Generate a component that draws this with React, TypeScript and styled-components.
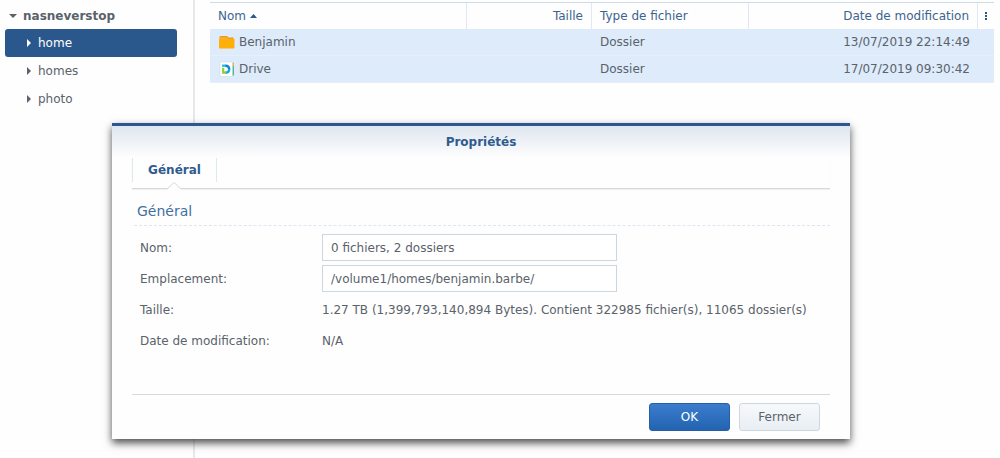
import React from "react";
import styled, { createGlobalStyle, css } from "styled-components";

const GlobalStyle = createGlobalStyle`
  *, *::before, *::after { box-sizing: border-box; }
  body {
    margin: 0;
    background: #fefefe;
    color: #5a626a;
    font-family: "DejaVu Sans", Verdana, sans-serif;
    font-size: 12px;
    line-height: 16px;
  }
  button, input { font: inherit; color: inherit; }
`;

const Screen = styled.div`
  position: relative;
  display: flex;
  min-height: 100vh;
`;

const Sidebar = styled.nav`
  flex: none;
  width: 195px;
  padding: 2px 16px 0 5px;
  border-right: 2px solid #e6e9ec;
`;

const TreeItem = styled.button<{ $level: number; $selected?: boolean }>`
  display: flex;
  align-items: center;
  gap: ${(p) => (p.$level === 0 ? 6 : 7)}px;
  width: 100%;
  height: ${(p) => (p.$level === 0 ? 27 : 28)}px;
  padding: 0 0 0 ${(p) => (p.$level === 0 ? 4 : 22)}px;
  border: 0;
  border-radius: 3px;
  background: none;
  text-align: left;
  font-weight: ${(p) => (p.$level === 0 ? 700 : 400)};
  ${(p) =>
    p.$selected &&
    css`
      background: #2a588c;
      color: #fff;
    `}
`;

const Content = styled.main`
  flex: 1;
  min-width: 0;
  padding: 2px 6px 0 15px;
`;

const FileTable = styled.table`
  width: 100%;
  table-layout: fixed;
  border-collapse: separate;
  border-spacing: 0;
  border-top: 1px solid #cddcea;
`;

const Col = styled.col<{ $width?: number }>`
  width: ${(p) => (p.$width ? `${p.$width}px` : "auto")};
`;

const HeadCell = styled.th<{ $right?: boolean }>`
  height: 26px;
  padding: 0 8px;
  border-right: 1px solid #dfe9f5;
  color: #3c648f;
  font-weight: 400;
  text-align: ${(p) => (p.$right ? "right" : "left")};
  white-space: nowrap;
`;

const MenuCell = styled(HeadCell)`
  padding: 0;
  border-right: 0;
`;

const SortButton = styled.button`
  display: flex;
  align-items: center;
  gap: 4px;
  padding: 0;
  border: 0;
  background: none;
`;

const MenuButton = styled.button`
  display: flex;
  width: 100%;
  height: 25px;
  align-items: center;
  justify-content: center;
  padding: 0;
  border: 0;
  background: none;
`;

const Cell = styled.td<{ $right?: boolean }>`
  height: 27px;
  padding: 0 8px;
  background: #deebfb;
  border-bottom: 1px solid #e6effa;
  text-align: ${(p) => (p.$right ? "right" : "left")};
  white-space: nowrap;
`;

const FileName = styled.span`
  display: flex;
  align-items: center;
  gap: 4px;
`;

const Dialog = styled.section`
  position: absolute;
  top: 123px;
  left: 112px;
  right: 150px;
  padding: 0 20px 8px;
  border-top: 3px solid #2a588f;
  background: linear-gradient(#dfe6ef, #fefefe 32px);
  box-shadow: 0 4px 8px rgba(0, 0, 0, 0.7);
`;

const DialogTitle = styled.h1`
  margin: 0;
  padding: 8px 0;
  color: #2f5b90;
  font-size: 12px;
  line-height: 16px;
  text-align: center;
`;

const TabBar = styled.div`
  display: flex;
  height: 31px;
  border-bottom: 1px solid #d6d9db;
  box-shadow: 0 1px 1px #f0f1f2;
`;

const Tab = styled.button`
  position: relative;
  width: 85px;
  height: 24px;
  padding: 0;
  border: solid #dfe7ef;
  border-width: 0 1px;
  background: none;
  color: #2f5b90;
  font-weight: 700;
`;

const TabPointer = styled.svg`
  position: absolute;
  top: 24px;
  left: 34px;
`;

const Panel = styled.div`
  padding: 12px 0 0 2px;
`;

const SectionTitle = styled.h2`
  margin: 0 0 8px;
  padding: 0 0 4px 3px;
  border-bottom: 1px dashed #dce5f0;
  color: #41709f;
  font-size: 14px;
  font-weight: 400;
  line-height: 20px;
`;

const Form = styled.div`
  display: flex;
  flex-direction: column;
  gap: 4px;
  padding-left: 6px;
`;

const Row = styled.div`
  display: flex;
  align-items: center;
  height: 27px;
`;

const Label = styled.label`
  flex: none;
  width: 182px;
`;

const TextBox = styled.input`
  width: 295px;
  height: 27px;
  padding: 0 8px;
  border: 1px solid #ccd6df;
  border-radius: 0;
  background: #fff;
`;

const Value = styled.output`
  white-space: nowrap;
`;

const Footer = styled.footer`
  display: flex;
  justify-content: flex-end;
  gap: 9px;
  margin-top: 40px;
  padding: 8px 10px 0 0;
  border-top: 1px solid #d6d9db;
`;

const ActionButton = styled.button<{ $primary?: boolean }>`
  width: 81px;
  height: 28px;
  padding: 0;
  border: 1px solid ${(p) => (p.$primary ? "#245fa6" : "#cdd7e2")};
  border-radius: 3px;
  background: ${(p) =>
    p.$primary ? "linear-gradient(#3b7dcc, #2264b2)" : "linear-gradient(#f6f9fc, #e9eef3)"};
  color: ${(p) => (p.$primary ? "#fff" : "#5a636c")};
`;

const Arrow = ({ open }: { open?: boolean }) =>
  open ? (
    <svg width="8" height="4" viewBox="0 0 8 4" fill="currentColor" aria-hidden="true">
      <path d="M0 0h8L4 4z" />
    </svg>
  ) : (
    <svg width="4" height="8" viewBox="0 0 4 8" fill="currentColor" aria-hidden="true">
      <path d="M0 0l4 4-4 4z" />
    </svg>
  );

const FolderIcon = () => (
  <svg width="17" height="16" viewBox="0 0 17 16" aria-hidden="true">
    <path d="M1.500 3Q1.500 2 2.500 2H9l1.500 1.500h5V6h-14z" fill="#f39a18" />
    <path d="M1 5h15.500v8.500q0 1-1 1H2q-1 0-1-1z" fill="#ffaf05" />
    <path d="M2 4.200h7.500" stroke="#ffd590" strokeWidth="0.600" fill="none" />
  </svg>
);

const DriveIcon = () => (
  <svg width="17" height="16" viewBox="0 0 17 16" aria-hidden="true">
    <path d="M13 2h3v12.500h-3z" fill="#45bd92" />
    <path d="M11 1.500h5v4z" fill="#f5b43c" />
    <rect x="2" y="1" width="12.500" height="14.500" rx="1" fill="#fff" stroke="#c9d3dc" strokeWidth="0.500" />
    <path d="M4 4.700h4" stroke="#20c4e0" strokeWidth="2.400" />
    <path d="M7.500 4.700q3.700 0 3.700 3.600" stroke="#1680d8" strokeWidth="2.400" fill="none" />
    <path d="M11.200 8q0 3.700-3.700 3.700" stroke="#18a8d8" strokeWidth="2.400" fill="none" />
    <path d="M8 11.700H5.200V7" stroke="#8fce30" strokeWidth="2.200" fill="none" />
  </svg>
);

const files = [
  { name: "Benjamin", type: "Dossier", date: "13/07/2019 22:14:49", icon: <FolderIcon /> },
  { name: "Drive", type: "Dossier", date: "17/07/2019 09:30:42", icon: <DriveIcon /> },
];

const folders = ["home", "homes", "photo"];

export default function App() {
  return (
    <>
      <GlobalStyle />
      <Screen>
        <Sidebar>
          <TreeItem $level={0}>
            <Arrow open />
            nasneverstop
          </TreeItem>
          {folders.map((name) => (
            <TreeItem key={name} $level={1} $selected={name === "home"}>
              <Arrow />
              {name}
            </TreeItem>
          ))}
        </Sidebar>
        <Content>
          <FileTable>
            <colgroup>
              <Col />
              <Col $width={125} />
              <Col $width={157} />
              <Col $width={229} />
              <Col $width={16} />
            </colgroup>
            <thead>
              <tr>
                <HeadCell>
                  <SortButton>
                    Nom
                    <svg width="7" height="4" viewBox="0 0 7 4" fill="#2a588f" aria-hidden="true">
                      <path d="M0 4h7L3.500 0z" />
                    </svg>
                  </SortButton>
                </HeadCell>
                <HeadCell $right>Taille</HeadCell>
                <HeadCell>Type de fichier</HeadCell>
                <HeadCell $right>Date de modification</HeadCell>
                <MenuCell>
                  <MenuButton aria-label="Colonnes">
                    <svg width="2" height="8" viewBox="0 0 2 8" fill="#2a588f" aria-hidden="true">
                      <path d="M0 0h2v2H0zM0 3h2v2H0zM0 6h2v2H0z" />
                    </svg>
                  </MenuButton>
                </MenuCell>
              </tr>
            </thead>
            <tbody>
              {files.map((file) => (
                <tr key={file.name}>
                  <Cell>
                    <FileName>
                      {file.icon}
                      {file.name}
                    </FileName>
                  </Cell>
                  <Cell />
                  <Cell>{file.type}</Cell>
                  <Cell $right>{file.date}</Cell>
                  <Cell />
                </tr>
              ))}
            </tbody>
          </FileTable>
        </Content>
        <Dialog role="dialog" aria-labelledby="dialog-title">
          <DialogTitle id="dialog-title">Propriétés</DialogTitle>
          <TabBar role="tablist">
            <Tab role="tab" aria-selected="true">
              Général
              <TabPointer width="14" height="8" viewBox="0 0 14 8" aria-hidden="true">
                <path d="M0 8L1 6.500 7 0.500l6 6L14 8z" fill="#fefefe" />
                <path d="M0.500 6.500L7 0.500l6.500 6" stroke="#d6d9db" fill="none" />
              </TabPointer>
            </Tab>
          </TabBar>
          <Panel role="tabpanel">
            <SectionTitle>Général</SectionTitle>
            <Form>
              <Row>
                <Label htmlFor="name">Nom:</Label>
                <TextBox id="name" readOnly value="0 fichiers, 2 dossiers" />
              </Row>
              <Row>
                <Label htmlFor="location">Emplacement:</Label>
                <TextBox id="location" readOnly value="/volume1/homes/benjamin.barbe/" />
              </Row>
              <Row>
                <Label htmlFor="size">Taille:</Label>
                <Value id="size">
                  1.27 TB (1,399,793,140,894 Bytes). Contient 322985 fichier(s), 11065 dossier(s)
                </Value>
              </Row>
              <Row>
                <Label htmlFor="modified">Date de modification:</Label>
                <Value id="modified">N/A</Value>
              </Row>
            </Form>
          </Panel>
          <Footer>
            <ActionButton $primary>OK</ActionButton>
            <ActionButton>Fermer</ActionButton>
          </Footer>
        </Dialog>
      </Screen>
    </>
  );
}
